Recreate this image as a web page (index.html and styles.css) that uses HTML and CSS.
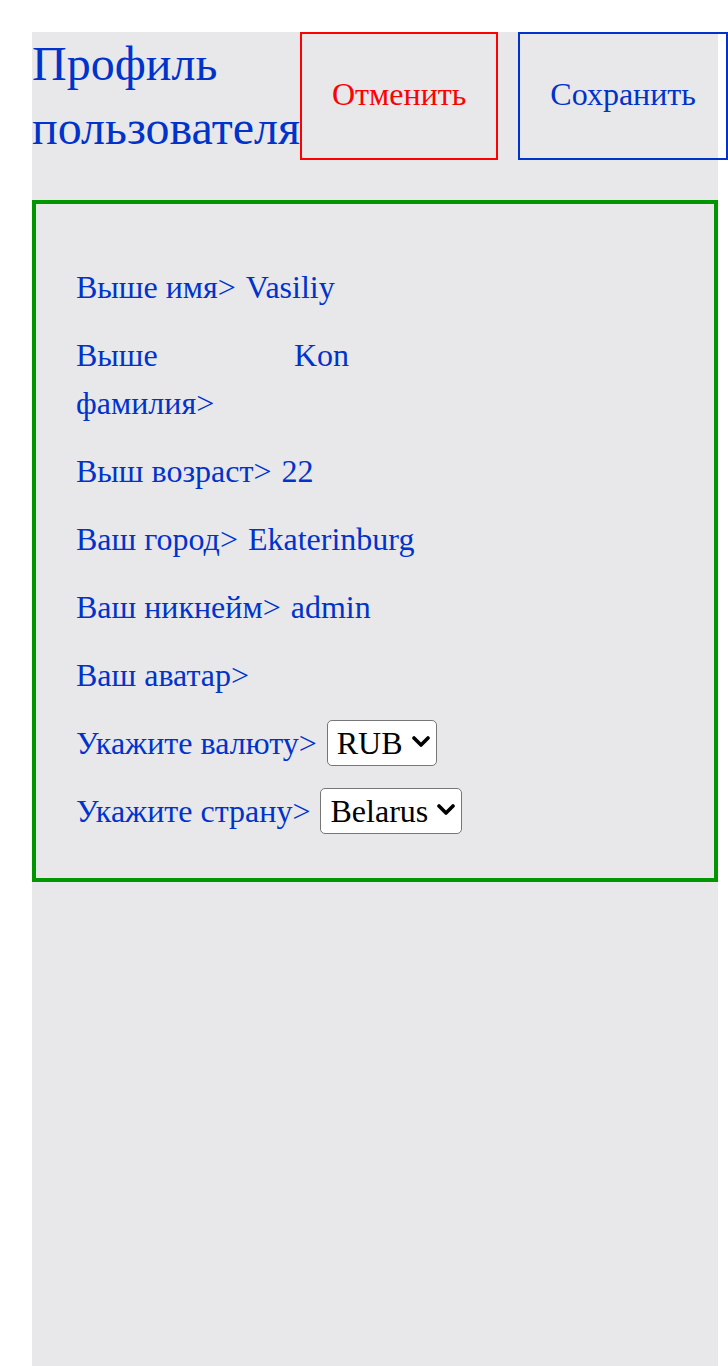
FILE: index.html
```html
<!DOCTYPE html>
<html lang="ru">
<head>
<meta charset="utf-8">
<title>Профиль пользователя</title>
<link rel="stylesheet" href="styles.css">
</head>
<body>
<div class="page">
  <header class="header">
    <h1 class="title">Профиль пользователя</h1>
    <button class="btn btn-cancel">Отменить</button>
    <button class="btn btn-save">Сохранить</button>
  </header>
  <section class="card">
    <div class="row"><span class="label">Выше имя&gt;</span><span class="value">Vasiliy</span></div>
    <div class="row"><span class="label">Выше фамилия&gt;</span><span class="value">Kon</span></div>
    <div class="row"><span class="label">Выш возраст&gt;</span><span class="value">22</span></div>
    <div class="row"><span class="label">Ваш город&gt;</span><span class="value">Ekaterinburg</span></div>
    <div class="row"><span class="label">Ваш никнейм&gt;</span><span class="value">admin</span></div>
    <div class="row"><span class="label">Ваш аватар&gt;</span><span class="value"></span></div>
    <div class="row"><span class="label wide">Укажите валюту&gt;</span>
      <span class="select-wrap">
        <select class="select"><option>RUB</option><option>USD</option><option>EUR</option></select>
        <svg class="chevron" width="18" height="11" viewBox="0 0 18 11"><path d="M2 2 L9 9 L16 2" fill="none" stroke="#000" stroke-width="3.6" stroke-linecap="round" stroke-linejoin="round"/></svg>
      </span>
    </div>
    <div class="row"><span class="label wide">Укажите страну&gt;</span>
      <span class="select-wrap">
        <select class="select"><option>Belarus</option><option>Russia</option></select>
        <svg class="chevron" width="18" height="11" viewBox="0 0 18 11"><path d="M2 2 L9 9 L16 2" fill="none" stroke="#000" stroke-width="3.6" stroke-linecap="round" stroke-linejoin="round"/></svg>
      </span>
    </div>
  </section>
</div>
</body>
</html>
```
FILE: styles.css
```css
html, body {
  margin: 0;
  padding: 0;
  background: #ffffff;
}
body {
  font-family: "Liberation Serif", "Times New Roman", serif;
  color: #0033cc;
}
.page {
  margin: 32px 10px 0 32px;
  background: #e8e8eb;
  min-height: 1400px;
}
.header {
  display: flex;
  align-items: flex-start;
  height: 128px;
}
.title {
  margin: 0;
  font-size: 48px;
  line-height: 64px;
  font-weight: normal;
  color: #0033cc;
  flex: 0 1 auto;
}
.btn {
  flex: 0 0 auto;
  box-sizing: border-box;
  height: 128px;
  padding: 0 30px 5px;
  background: transparent;
  font-family: "Liberation Serif", "Times New Roman", serif;
  font-size: 32px;
  line-height: 36px;
  cursor: pointer;
}
.btn-cancel {
  border: 2px solid #ff0000;
  color: #ff0000;
}
.btn-save {
  border: 2px solid #0033cc;
  color: #0033cc;
  margin-left: 20px;
}
.card {
  margin-top: 40px;
  border: 4px solid #009600;
  padding: 39px 40px 43px;
}
.row {
  display: flex;
  align-items: baseline;
  gap: 10px;
  margin-top: 20px;
  font-size: 32px;
  line-height: 48px;
}
.label {
  max-width: 208px;
  flex: 0 1 auto;
}
.label.wide {
  max-width: none;
}
.value {
  flex: 0 0 auto;
}
.select-wrap {
  position: relative;
  display: inline-block;
  flex: 0 0 auto;
}
.select {
  -webkit-appearance: none;
  appearance: none;
  font-family: "Liberation Serif", "Times New Roman", serif;
  font-size: 32px;
  line-height: 36px;
  height: 46px;
  padding: 4px 33px 4px 9px;
  margin: 0;
  color: #000;
  background: #fff;
  border: 1px solid #767676;
  border-radius: 5px;
}
.chevron {
  position: absolute;
  right: 7px;
  top: 17px;
  pointer-events: none;
}
```
